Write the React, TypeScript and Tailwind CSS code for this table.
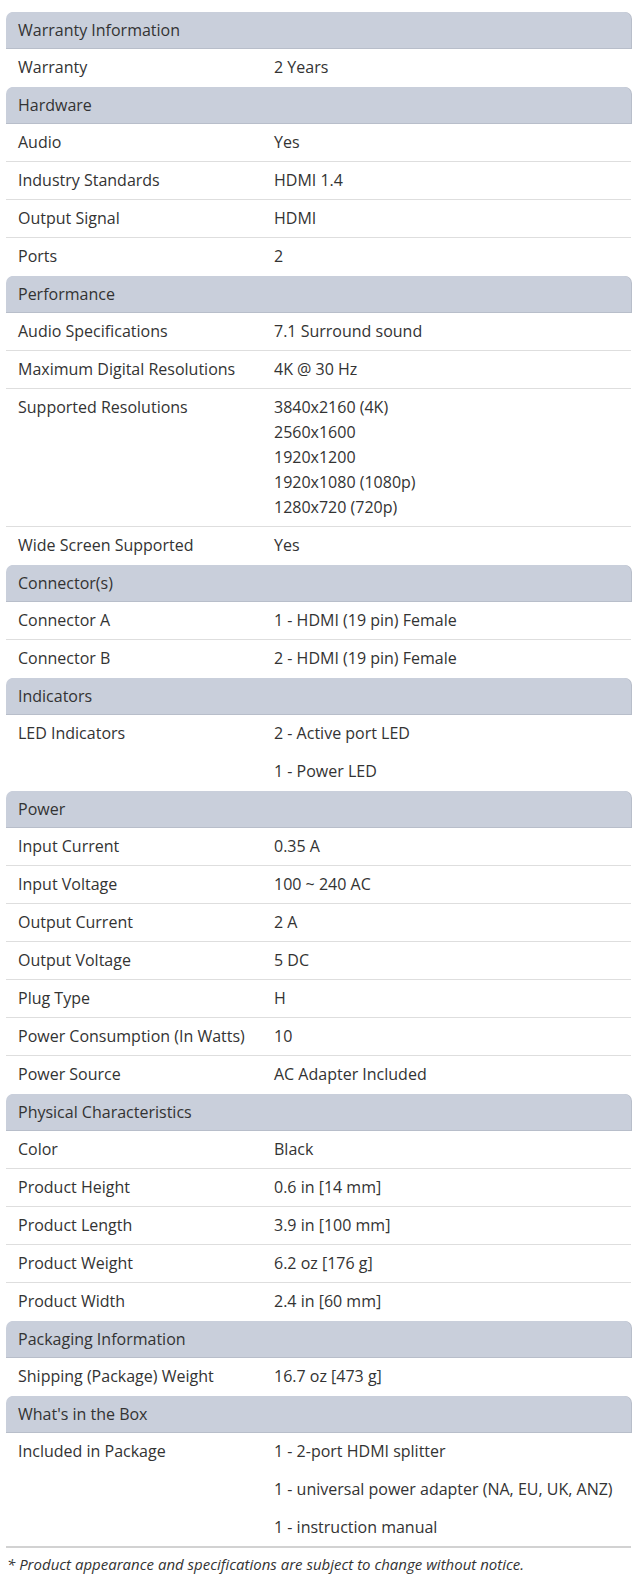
type Row = { label: string; values: string[]; lines?: boolean };
type Section = { title: string; rows: Row[] };

const sections: Section[] = [
  { title: 'Warranty Information', rows: [{ label: 'Warranty', values: ['2 Years'] }] },
  {
    title: 'Hardware',
    rows: [
      { label: 'Audio', values: ['Yes'] },
      { label: 'Industry Standards', values: ['HDMI 1.4'] },
      { label: 'Output Signal', values: ['HDMI'] },
      { label: 'Ports', values: ['2'] },
    ],
  },
  {
    title: 'Performance',
    rows: [
      { label: 'Audio Specifications', values: ['7.1 Surround sound'] },
      { label: 'Maximum Digital Resolutions', values: ['4K @ 30 Hz'] },
      {
        label: 'Supported Resolutions',
        values: ['3840x2160 (4K)', '2560x1600', '1920x1200', '1920x1080 (1080p)', '1280x720 (720p)'],
        lines: true,
      },
      { label: 'Wide Screen Supported', values: ['Yes'] },
    ],
  },
  {
    title: 'Connector(s)',
    rows: [
      { label: 'Connector A', values: ['1 - HDMI (19 pin) Female'] },
      { label: 'Connector B', values: ['2 - HDMI (19 pin) Female'] },
    ],
  },
  {
    title: 'Indicators',
    rows: [{ label: 'LED Indicators', values: ['2 - Active port LED', '1 - Power LED'] }],
  },
  {
    title: 'Power',
    rows: [
      { label: 'Input Current', values: ['0.35 A'] },
      { label: 'Input Voltage', values: ['100 ~ 240 AC'] },
      { label: 'Output Current', values: ['2 A'] },
      { label: 'Output Voltage', values: ['5 DC'] },
      { label: 'Plug Type', values: ['H'] },
      { label: 'Power Consumption (In Watts)', values: ['10'] },
      { label: 'Power Source', values: ['AC Adapter Included'] },
    ],
  },
  {
    title: 'Physical Characteristics',
    rows: [
      { label: 'Color', values: ['Black'] },
      { label: 'Product Height', values: ['0.6 in [14 mm]'] },
      { label: 'Product Length', values: ['3.9 in [100 mm]'] },
      { label: 'Product Weight', values: ['6.2 oz [176 g]'] },
      { label: 'Product Width', values: ['2.4 in [60 mm]'] },
    ],
  },
  {
    title: 'Packaging Information',
    rows: [{ label: 'Shipping (Package) Weight', values: ['16.7 oz [473 g]'] }],
  },
  {
    title: "What's in the Box",
    rows: [
      {
        label: 'Included in Package',
        values: ['1 - 2-port HDMI splitter', '1 - universal power adapter (NA, EU, UK, ANZ)', '1 - instruction manual'],
      },
    ],
  },
];

function SpecRow({ row, last, final }: { row: Row; last: boolean; final: boolean }) {
  const border = final ? 'border-b-2 border-[#d2d2d2]' : last ? 'border-b border-transparent' : 'border-b border-[#dedede]';
  return (
    <div className={`flex ${border}`}>
      <div className="w-[268px] shrink-0 pl-[12px] py-[6px] leading-[25px]">{row.label}</div>
      <div className={`flex-1 py-[6px] leading-[25px] flex flex-col ${row.lines ? '' : 'gap-[13px]'}`}>
        {row.values.map((v) => (
          <div key={v}>{v}</div>
        ))}
      </div>
    </div>
  );
}

export default function App() {
  return (
    <div
      className="bg-white text-[#333] text-[16px] pt-[12px] pb-[20px]"
      style={{ fontFamily: '"Open Sans", "Noto Sans", sans-serif' }}
    >
      <div className="mx-[6px]">
        {sections.map((s, si) => (
          <div key={s.title}>
            <div className="bg-[#c9cfdb] rounded-t-[7px] h-[37px] pl-[12px] py-[6px] leading-[25px] border-b border-[#b8beca] shadow-[1px_0_0_#b8beca]">
              {s.title}
            </div>
            {s.rows.map((r, ri) => (
              <SpecRow
                key={r.label}
                row={r}
                last={ri === s.rows.length - 1}
                final={si === sections.length - 1 && ri === s.rows.length - 1}
              />
            ))}
          </div>
        ))}
      </div>
      <p className="mt-[6px] pl-[7px] text-[15px] italic leading-[20px] text-[#333]">
        * Product appearance and specifications are subject to change without notice.
      </p>
    </div>
  );
}
